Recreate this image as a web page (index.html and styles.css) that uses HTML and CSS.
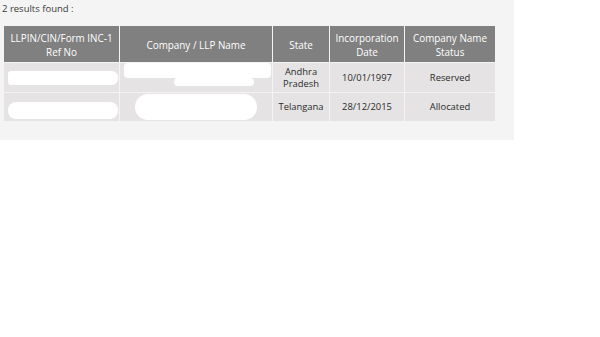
FILE: index.html
```html
<!DOCTYPE html>
<html>
<head>
<meta charset="utf-8">
<link rel="stylesheet" href="styles.css">
</head>
<body>
<div class="panel">
  <div class="count">2 results found :</div>
  <table class="results">
    <colgroup>
      <col class="c1"><col class="c2"><col class="c3"><col class="c4"><col class="c5">
    </colgroup>
    <thead>
      <tr>
        <th>LLPIN/CIN/Form INC-1<br>Ref No</th>
        <th>Company / LLP Name</th>
        <th>State</th>
        <th>Incorporation<br>Date</th>
        <th>Company Name<br>Status</th>
      </tr>
    </thead>
    <tbody>
      <tr class="r1">
        <td class="redact"><div class="blob b1"></div></td>
        <td class="redact"><div class="blob b2"></div><div class="blob b2b"></div></td>
        <td>Andhra<br>Pradesh</td>
        <td>10/01/1997</td>
        <td>Reserved</td>
      </tr>
      <tr class="r2">
        <td class="redact"><div class="blob b3"></div></td>
        <td class="redact"><div class="blob b4"></div></td>
        <td>Telangana</td>
        <td>28/12/2015</td>
        <td>Allocated</td>
      </tr>
    </tbody>
  </table>
</div>
</body>
</html>
```
FILE: styles.css
```css
html, body {
  margin: 0;
  padding: 0;
  background: #ffffff;
}
body {
  font-family: "Open Sans", "Noto Sans", sans-serif;
  font-size: 9.5px;
  color: #333;
}
.panel {
  width: 514px;
  height: 140px;
  background: #f4f4f4;
  padding: 2px 0 0 0;
  box-sizing: border-box;
}
.count {
  padding-left: 2px;
  line-height: 14px;
  height: 14px;
  color: #3a3a3a;
}
.results {
  margin: 9px 0 0 3px;
  border-collapse: collapse;
  table-layout: fixed;
  width: 492px;
}
.c1 { width: 116px; }
.c2 { width: 153px; }
.c3 { width: 57px; }
.c4 { width: 75px; }
.c5 { width: 91px; }
.results th, .results td {
  border: 1px solid #f4f4f4;
  text-align: center;
  vertical-align: middle;
  padding: 0 2px;
  line-height: 12px;
}
.results th {
  background: #808080;
  color: #fff;
  font-weight: normal;
  font-size: 9.9px;
  height: 35px;
  line-height: 14px;
  padding-top: 1px;
}
.results td {
  background: #e5e3e3;
  color: #2b2b2b;
  font-size: 9.4px;
}
.r1 td { height: 29px; }
.r2 td { height: 28px; }
.redact { padding: 0; }
.blob {
  background: #fff;
  border-radius: 5px;
  filter: blur(0.6px);
}
.b1 { width: 110px; height: 14px; margin: 1px 0 0 2px; border-radius: 3px 6px 6px 3px; }
.b2 { width: 147px; height: 15px; margin: -6px 0 0 2px; border-radius: 4px; }
.b2b { width: 80px; height: 8px; margin: 0 0 0 52px; border-radius: 4px; }
.b3 { width: 110px; height: 17px; margin: 6px 0 0 2px; border-radius: 8px; }
.b4 { width: 122px; height: 26px; margin: 0 0 0 13px; border-radius: 13px; }
```
